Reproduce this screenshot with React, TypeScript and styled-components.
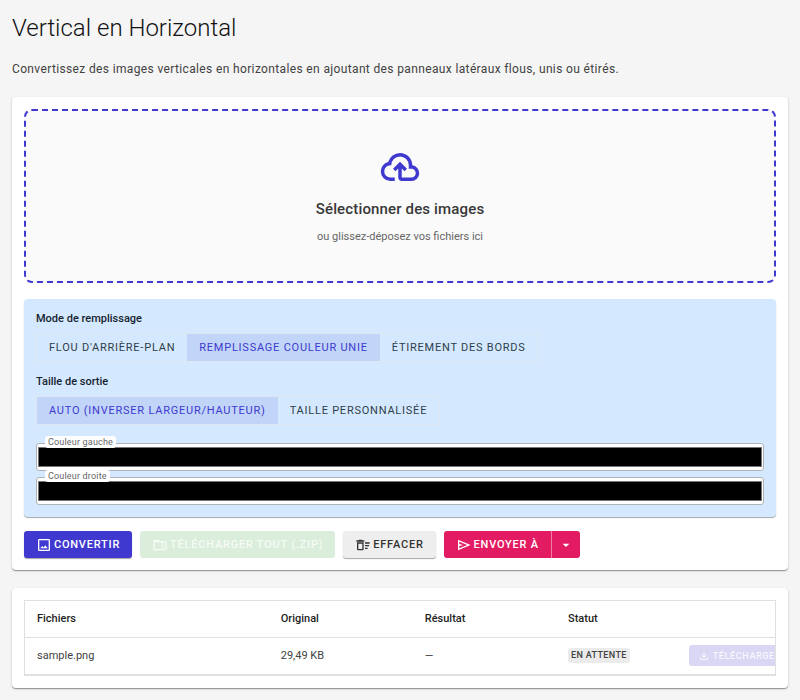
import React from "react";
import styled, { createGlobalStyle, css } from "styled-components";

const Global = createGlobalStyle`
  *, *::before, *::after { box-sizing: border-box; }
  body {
    margin: 0;
    background: #f5f5f5;
    color: #1f1f1f;
    font-family: Roboto, "Liberation Sans", sans-serif;
    font-size: 11px;
  }
  button, input { font-family: inherit; }
`;

const Page = styled.main`
  display: flex;
  flex-direction: column;
  padding: 12px;
`;

const Title = styled.h1`
  margin: 0;
  font-size: 24px;
  line-height: 32px;
  font-weight: 300;
  color: #111;
`;

const Lead = styled.p`
  margin: 16px 0 18px;
  font-size: 12px;
  line-height: 19px;
  letter-spacing: 0.03em;
  color: #424242;
`;

const Card = styled.section`
  margin-bottom: 18px;
  padding: 12px;
  background: #fff;
  border-radius: 4px;
  box-shadow: 0 1px 1px rgba(0, 0, 0, 0.35), 0 1px 3px rgba(0, 0, 0, 0.12);
`;

const DropZone = styled.button`
  display: flex;
  flex-direction: column;
  align-items: center;
  width: 100%;
  padding: 35px 16px;
  border: 2px dashed #4039cf;
  border-radius: 8px;
  background: #fafafa;
  cursor: pointer;
`;

const CloudMark = styled.span`
  display: flex;
  color: #4039cf;
`;

const DropTitle = styled.span`
  margin-top: 9px;
  font-size: 15px;
  line-height: 24px;
  font-weight: 500;
  letter-spacing: 0.01em;
  color: #383838;
`;

const DropHint = styled.span`
  margin-top: 7px;
  font-size: 11px;
  line-height: 18px;
  color: #666;
`;

const Options = styled.div`
  display: flex;
  flex-direction: column;
  margin-top: 16px;
  padding: 12px;
  border-radius: 4px;
  background: #d4e9ff;
  box-shadow: 0 1px 1px rgba(0, 0, 0, 0.35);
`;

const Group = styled.div`
  display: flex;
  flex-direction: column;
  align-items: flex-start;
  margin-bottom: 12px;
`;

const GroupLabel = styled.span`
  margin-bottom: 6px;
  font-size: 11px;
  line-height: 16px;
  font-weight: 500;
  color: #17242f;
`;

const Segments = styled.div`
  display: flex;
  border: 1px solid #dce7ef;
`;

const Segment = styled.button<{ $active?: boolean }>`
  height: 27px;
  padding: 0 12px;
  border: 0;
  background: ${(p) => (p.$active ? "#c1d5f9" : "transparent")};
  color: ${(p) => (p.$active ? "#4039cf" : "#2f3e49")};
  font-size: 11px;
  font-weight: 400;
  letter-spacing: 0.07em;
  text-transform: uppercase;
  white-space: nowrap;
  cursor: pointer;
`;

const ColorField = styled.div`
  position: relative;
  display: flex;
  margin-top: 6px;
`;

const ColorLabel = styled.label`
  position: absolute;
  top: -7px;
  left: 9px;
  padding: 0 3px;
  border-radius: 3px;
  background: #fff;
  color: #666;
  font-size: 9px;
  line-height: 12px;
  letter-spacing: 0.02em;
`;

const ColorInput = styled.input`
  flex: 1;
  width: 100%;
  height: 28px;
  margin: 0;
  padding: 3px 1px;
  border: 1px solid #b0b3b8;
  border-radius: 3px;
  background: #fff;
  appearance: none;
  &::-webkit-color-swatch-wrapper { padding: 0; }
  &::-webkit-color-swatch { border: 1px solid #777; border-radius: 0; }
`;

const Actions = styled.div`
  display: flex;
  flex-wrap: wrap;
  gap: 8px;
  margin-top: 14px;
`;

const tones = {
  primary: css`background: #4039cf; color: #fff;`,
  success: css`background: #dbeedc; color: #f5fbf5; box-shadow: none;`,
  neutral: css`background: #eee; color: #333;`,
  accent: css`background: #e31b62; color: #fff; box-shadow: none;`,
};

const ActionButton = styled.button<{ $tone: keyof typeof tones }>`
  display: flex;
  align-items: center;
  gap: 2px;
  height: 27px;
  padding: 0 12px;
  border: 0;
  border-radius: 3px;
  box-shadow: 0 1px 1px rgba(0, 0, 0, 0.35);
  font-size: 11px;
  font-weight: 500;
  letter-spacing: 0.07em;
  text-transform: uppercase;
  white-space: nowrap;
  cursor: pointer;
  ${(p) => tones[p.$tone]}
  &:disabled { cursor: default; }
`;

const Split = styled.div`
  display: flex;
  & > button:first-child {
    border-radius: 3px 0 0 3px;
    border-right: 1px solid #f27ba2;
  }
  & > button:last-child {
    padding: 0 6px;
    border-radius: 0 3px 3px 0;
  }
`;

const TableFrame = styled.div`
  overflow: hidden;
  border: 1px solid #e0e0e0;
  border-bottom-width: 2px;
`;

const Table = styled.table`
  width: 100%;
  border-collapse: collapse;
  table-layout: fixed;
  font-size: 11px;
  th, td {
    height: 37px;
    padding: 0 12px;
    text-align: left;
    white-space: nowrap;
  }
  th {
    height: 36px;
    border-bottom: 1px solid #e0e0e0;
    font-weight: 500;
    color: #1f1f1f;
  }
  td { color: #424242; }
  td:last-child { padding: 0; }
`;

const Col = styled.col<{ $share?: number }>`
  width: ${(p) => (p.$share ? `${p.$share}%` : "auto")};
`;

const Chip = styled.span`
  display: inline-block;
  padding: 0 3px;
  border-radius: 3px;
  background: #ebebeb;
  color: #424242;
  font-size: 9px;
  line-height: 15px;
  font-weight: 500;
  letter-spacing: 0.04em;
  text-transform: uppercase;
`;

const RowButton = styled.button`
  display: flex;
  align-items: center;
  gap: 3px;
  height: 21px;
  padding: 0 9px;
  border: 0;
  border-radius: 3px;
  background: #d9d7f4;
  color: #f8f7fe;
  font-size: 9px;
  font-weight: 500;
  letter-spacing: 0.07em;
  text-transform: uppercase;
`;

const paths = {
  cloud:
    "M6.5 20Q4.22 20 2.61 18.43 1 16.85 1 14.58 1 12.63 2.17 11.1 3.35 9.57 5.25 9.15 5.88 6.85 7.75 5.43 9.63 4 12 4 14.93 4 16.96 6.04 19 8.07 19 11 20.73 11.2 21.86 12.5 23 13.78 23 15.5 23 17.38 21.69 18.69 20.38 20 18.5 20H13Q12.18 20 11.59 19.41 11 18.83 11 18V12.85L9.4 14.4L8 13L12 9L16 13L14.6 14.4L13 12.85V18H18.5Q19.55 18 20.27 17.27 21 16.55 21 15.5 21 14.45 20.27 13.73 19.55 13 18.5 13H17V11Q17 8.93 15.54 7.46 14.08 6 12 6 9.93 6 8.46 7.46 7 8.93 7 11H6.5Q5.05 11 4.03 12.03 3 13.05 3 14.5 3 15.95 4.03 17 5.05 18 6.5 18H9V20Z",
  image:
    "M19,19H5V5H19M19,3H5A2,2 0 0,0 3,5V19A2,2 0 0,0 5,21H19A2,2 0 0,0 21,19V5A2,2 0 0,0 19,3M13.96,12.29L11.21,15.83L9.25,13.47L6.5,17H17.5L13.96,12.29Z",
  zip: "M20 6H12L10 4H4C2.9 4 2 4.9 2 6V18C2 19.1 2.9 20 4 20H20C21.1 20 22 19.1 22 18V8C22 6.9 21.1 6 20 6M20 18H16V16H14V18H4V8H14V10H16V8H20V18M16 12V10H18V12H16M14 12H16V14H14V12M18 16H16V14H18V16Z",
  sweep:
    "M15,16H19V18H15V16M15,8H22V10H15V8M15,12H21V14H15V12M11,10V18H5V10H11M13,8H3V18A2,2 0 0,0 5,20H11A2,2 0 0,0 13,18V8M14,5H11L10,4H6L5,5H2V7H14V5Z",
  send: "M3 20V4L22 12ZM5 17L16.85 12L5 7V10.5L11 12L5 13.5Z",
  down: "M7,10L12,15L17,10H7Z",
  download:
    "M12 16L7 11L8.4 9.55L11 12.15V4H13V12.15L15.6 9.55L17 11ZM6 20Q5.18 20 4.59 19.41 4 18.83 4 18V15H6V18H18V15H20V18Q20 18.83 19.41 19.41 18.83 20 18 20Z",
};

const Icon = ({ name, size = 16 }: { name: keyof typeof paths; size?: number }) => (
  <svg width={size} height={size} viewBox="0 0 24 24" fill="currentColor" fillRule="evenodd" aria-hidden="true">
    <path d={paths[name]} />
  </svg>
);

export default function App() {
  return (
    <>
      <Global />
      <Page>
        <Title>Vertical en Horizontal</Title>
        <Lead>
          Convertissez des images verticales en horizontales en ajoutant des panneaux latéraux flous, unis ou étirés.
        </Lead>
        <Card>
          <DropZone type="button">
            <CloudMark><Icon name="cloud" size={42} /></CloudMark>
            <DropTitle>Sélectionner des images</DropTitle>
            <DropHint>ou glissez-déposez vos fichiers ici</DropHint>
          </DropZone>
          <Options>
            <Group role="group" aria-labelledby="fill-label">
              <GroupLabel id="fill-label">Mode de remplissage</GroupLabel>
              <Segments>
                <Segment type="button">Flou d'arrière-plan</Segment>
                <Segment type="button" $active aria-pressed="true">Remplissage couleur unie</Segment>
                <Segment type="button">Étirement des bords</Segment>
              </Segments>
            </Group>
            <Group role="group" aria-labelledby="size-label">
              <GroupLabel id="size-label">Taille de sortie</GroupLabel>
              <Segments>
                <Segment type="button" $active aria-pressed="true">Auto (inverser largeur/hauteur)</Segment>
                <Segment type="button">Taille personnalisée</Segment>
              </Segments>
            </Group>
            <ColorField>
              <ColorInput id="left-color" type="color" defaultValue="#000000" />
              <ColorLabel htmlFor="left-color">Couleur gauche</ColorLabel>
            </ColorField>
            <ColorField>
              <ColorInput id="right-color" type="color" defaultValue="#000000" />
              <ColorLabel htmlFor="right-color">Couleur droite</ColorLabel>
            </ColorField>
          </Options>
          <Actions>
            <ActionButton type="button" $tone="primary"><Icon name="image" />Convertir</ActionButton>
            <ActionButton type="button" $tone="success" disabled><Icon name="zip" />Télécharger tout (.zip)</ActionButton>
            <ActionButton type="button" $tone="neutral"><Icon name="sweep" />Effacer</ActionButton>
            <Split>
              <ActionButton type="button" $tone="accent"><Icon name="send" />Envoyer à</ActionButton>
              <ActionButton type="button" $tone="accent" aria-label="Autres destinations"><Icon name="down" /></ActionButton>
            </Split>
          </Actions>
        </Card>
        <Card>
          <TableFrame>
            <Table>
              <colgroup>
                <Col $share={32.5} />
                <Col $share={19.2} />
                <Col $share={19.1} />
                <Col $share={17.7} />
                <Col />
              </colgroup>
              <thead>
                <tr>
                  <th scope="col">Fichiers</th>
                  <th scope="col">Original</th>
                  <th scope="col">Résultat</th>
                  <th scope="col">Statut</th>
                  <th scope="col" aria-label="Actions" />
                </tr>
              </thead>
              <tbody>
                <tr>
                  <td>sample.png</td>
                  <td>29,49 KB</td>
                  <td>—</td>
                  <td><Chip>En attente</Chip></td>
                  <td>
                    <RowButton type="button" disabled><Icon name="download" size={12} />Télécharger</RowButton>
                  </td>
                </tr>
              </tbody>
            </Table>
          </TableFrame>
        </Card>
      </Page>
    </>
  );
}
